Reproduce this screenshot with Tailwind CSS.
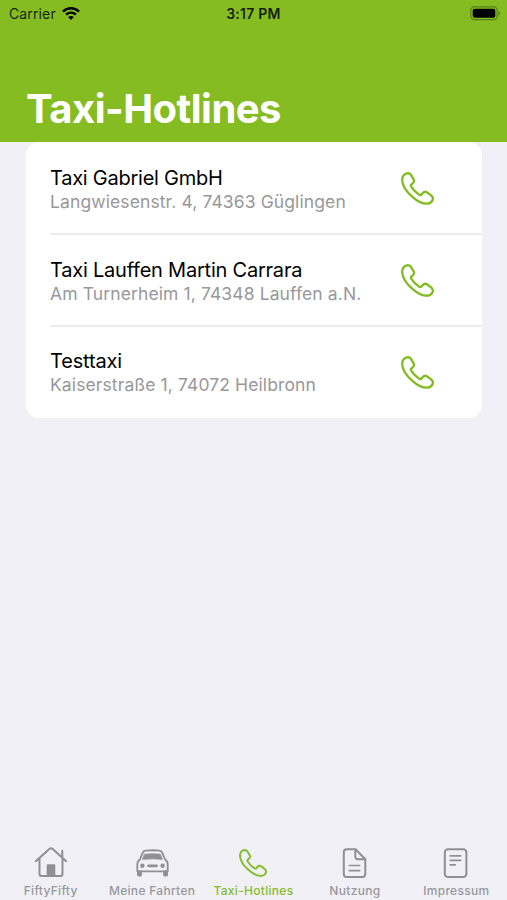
<!DOCTYPE html>
<html lang="de">
<head>
<meta charset="utf-8">
<title>Taxi-Hotlines</title>
<script src="https://cdn.jsdelivr.net/npm/@tailwindcss/browser@4"></script>
</head>
<body class="w-[507px] h-[900px] overflow-hidden bg-[#f0f0f6] font-['Inter',sans-serif] flex flex-col">
<svg class="hidden">
  <symbol id="phone" viewBox="0 0 33 33">
    <path d="M6.9 1.2C3.4 1.3 1 4 1.2 8.2C1.6 14 6 20.3 11.7 25.1C16 28.8 20.4 31.3 24.5 31.7C28 31.9 30.6 30.6 31.6 28C32.3 26.3 31.8 24.9 30.3 23.6L26.3 20.5C24.6 19.3 23 19.6 21.8 21L20.6 22.4C19.8 23.2 18.9 23.2 18 22.6C15 20.6 12.2 17.7 10.2 14.7C9.6 13.8 9.8 13 10.6 12.3L12 11.1C13.4 9.9 13.5 8.8 12.5 7.1L9.8 2.7C9.1 1.7 8.2 1.2 6.9 1.2Z" fill="none" stroke="currentColor" stroke-width="2.3" stroke-linejoin="round"/>
  </symbol>
</svg>
<header class="h-[142px] shrink-0 bg-[#85bc22] flex flex-col justify-between">
  <div class="h-[27px] grid grid-cols-3 items-center text-[14px] text-black/85">
    <div class="flex items-center gap-[6px] pl-[9px]">
      <span class="text-[14px] tracking-[0.13px]">Carrier</span>
      <svg class="w-[18px] h-[14px]" viewBox="0 0 18 14" fill="none" stroke="#000" stroke-width="2.4">
        <path d="M1 4.6C5.5.1 12.5.1 17 4.6M4.1 7.6C6.9 4.9 11.1 4.9 13.9 7.6"/>
        <path d="M6.2 10C7.8 8.5 10.2 8.5 11.8 10L9 13Z" fill="#000" stroke="none"/>
      </svg>
    </div>
    <span class="text-center font-semibold tracking-[0.25px]">3:17 PM</span>
    <div class="flex justify-end pr-[6px]">
      <svg class="w-[31px] h-[15px]" viewBox="0 0 31 15">
        <rect x=".8" y=".9" width="26.4" height="12.8" rx="3.6" fill="none" stroke="#56801a" stroke-width="1.2"/>
        <rect x="2.7" y="2.8" width="22.6" height="9" rx="2" fill="#000"/>
        <path d="M28.5 5.3C30.7 6 30.7 8.6 28.5 9.3Z" fill="#56801a"/>
      </svg>
    </div>
  </div>
  <h1 class="pl-[26px] pb-[8px] text-[40px] leading-[50px] font-bold text-white tracking-[-0.52px]">Taxi-Hotlines</h1>
</header>
<main class="flex-1 px-[25.5px]">
  <ul class="bg-white rounded-[13px] h-[275.5px] pl-[24.5px] flex flex-col">
    <li class="h-[93px] flex items-center justify-between border-b-2 border-[#ececee] pt-[3px] pr-[47.5px]">
      <div><p class="text-[20px] leading-[24px] text-black tracking-[-0.25px]">Taxi Gabriel GmbH</p><p class="text-[17.5px] leading-[23px] text-[#98989a] tracking-[0.11px]">Langwiesenstr. 4, 74363 Güglingen</p></div>
      <svg class="size-[33px] mb-px text-[#80bb20]"><use href="#phone"/></svg>
    </li>
    <li class="h-[92px] flex items-center justify-between border-b-2 border-[#ececee] pt-[2px] pr-[47.5px]">
      <div><p class="text-[20px] leading-[24px] text-black tracking-[-0.22px]">Taxi Lauffen Martin Carrara</p><p class="text-[17.5px] leading-[23px] text-[#98989a] tracking-[0.11px]">Am Turnerheim 1, 74348 Lauffen a.N.</p></div>
      <svg class="size-[33px] mb-px text-[#80bb20]"><use href="#phone"/></svg>
    </li>
    <li class="h-[90px] flex items-center justify-between pt-px pr-[47.5px]">
      <div><p class="text-[20px] leading-[24px] text-black tracking-[-0.15px]">Testtaxi</p><p class="text-[17.5px] leading-[23px] text-[#98989a] tracking-[0.11px]">Kaiserstraße 1, 74072 Heilbronn</p></div>
      <svg class="size-[33px] text-[#80bb20]"><use href="#phone"/></svg>
    </li>
  </ul>
</main>
<nav class="h-[56px] shrink-0 grid grid-cols-5 text-[12px] leading-[15px] font-medium text-[#98989d] tracking-[0.3px] whitespace-nowrap">
  <a class="flex flex-col items-center gap-[2px]">
    <svg class="w-[34px] h-[37px]" viewBox="0 0 34 37" fill="none" stroke="#8f8f94" stroke-width="2" stroke-linecap="round" stroke-linejoin="round">
      <path d="M1.8 17.2L15.6 4.8Q17 3.7 18.4 4.8L32.2 17.2M5.5 14.5V29.8Q5.5 32 7.7 32H26.3Q28.5 32 28.5 29.8V14.5M28.3 13V6.8"/>
      <path d="M13.7 21.2H20.3V31H13.7Z" fill="#8f8f94"/>
    </svg><span>FiftyFifty</span></a>
  <a class="flex flex-col items-center gap-[2px]">
    <svg class="w-[34px] h-[37px]" viewBox="0 0 34 37" fill="none" stroke="#8f8f94" stroke-width="1.8" stroke-linecap="round" stroke-linejoin="round">
      <path d="M4.9 15.5L7.7 8.8Q8.5 6.8 10.7 6.6Q17.5 5.9 24.3 6.6Q26.5 6.8 27.3 8.8L30.1 15.5Q32.7 17.1 32.7 20.1V27.3H2.3V20.1Q2.3 17.1 4.9 15.5Z"/>
      <path d="M9.7 10.2Q17.5 9.4 25.3 10.2L27.3 15.3Q17.5 14.4 7.7 15.3Z" fill="#8f8f94" stroke-width=".8"/>
      <path d="M2.9 27.5V30.7Q2.9 31.7 3.9 31.7H5Q6 31.7 6 30.7V27.5ZM29 27.5V30.7Q29 31.7 30 31.7H31.1Q32.1 31.7 32.1 30.7V27.5Z" fill="#8f8f94"/>
      <circle cx="7.4" cy="21.8" r="2.2" fill="#8f8f94" stroke="none"/><circle cx="27.6" cy="21.8" r="2.2" fill="#8f8f94" stroke="none"/>
      <path d="M13.5 21.8H21.5" stroke-width="2.8"/>
    </svg><span>Meine Fahrten</span></a>
  <a class="flex flex-col items-center gap-[2px] text-[#85bc2b]">
    <span class="h-[37px] pt-[5px]"><svg class="size-[28px]"><use href="#phone"/></svg></span><span>Taxi-Hotlines</span></a>
  <a class="flex flex-col items-center gap-[2px]">
    <svg class="w-[26px] h-[37px]" viewBox="0 0 26 37" fill="none" stroke="#8f8f94" stroke-width="2" stroke-linecap="round" stroke-linejoin="round">
      <path d="M4.6 5.2H13.6L23.3 15.2V30Q23.3 33 20.3 33H4.6Q1.8 33 1.8 30V8.2Q1.8 5.2 4.6 5.2ZM13.3 5.5V12.6Q13.3 15.2 15.9 15.2H23"/><path d="M7.4 21.5H17.6M7.4 26.7H17.6" stroke-width="1.7"/>
    </svg><span>Nutzung</span></a>
  <a class="flex flex-col items-center gap-[2px]">
    <svg class="w-[26px] h-[37px]" viewBox="0 0 26 37" fill="none" stroke="#8f8f94" stroke-width="2" stroke-linecap="round" stroke-linejoin="round">
      <rect x="1.8" y="5.2" width="21.6" height="27.8" rx="3.2"/><path d="M7.3 11.8H17.7M7.3 16.3H17.7M7.3 20.8H12.2" stroke-width="1.7"/>
    </svg><span>Impressum</span></a>
</nav>
</body>
</html>
